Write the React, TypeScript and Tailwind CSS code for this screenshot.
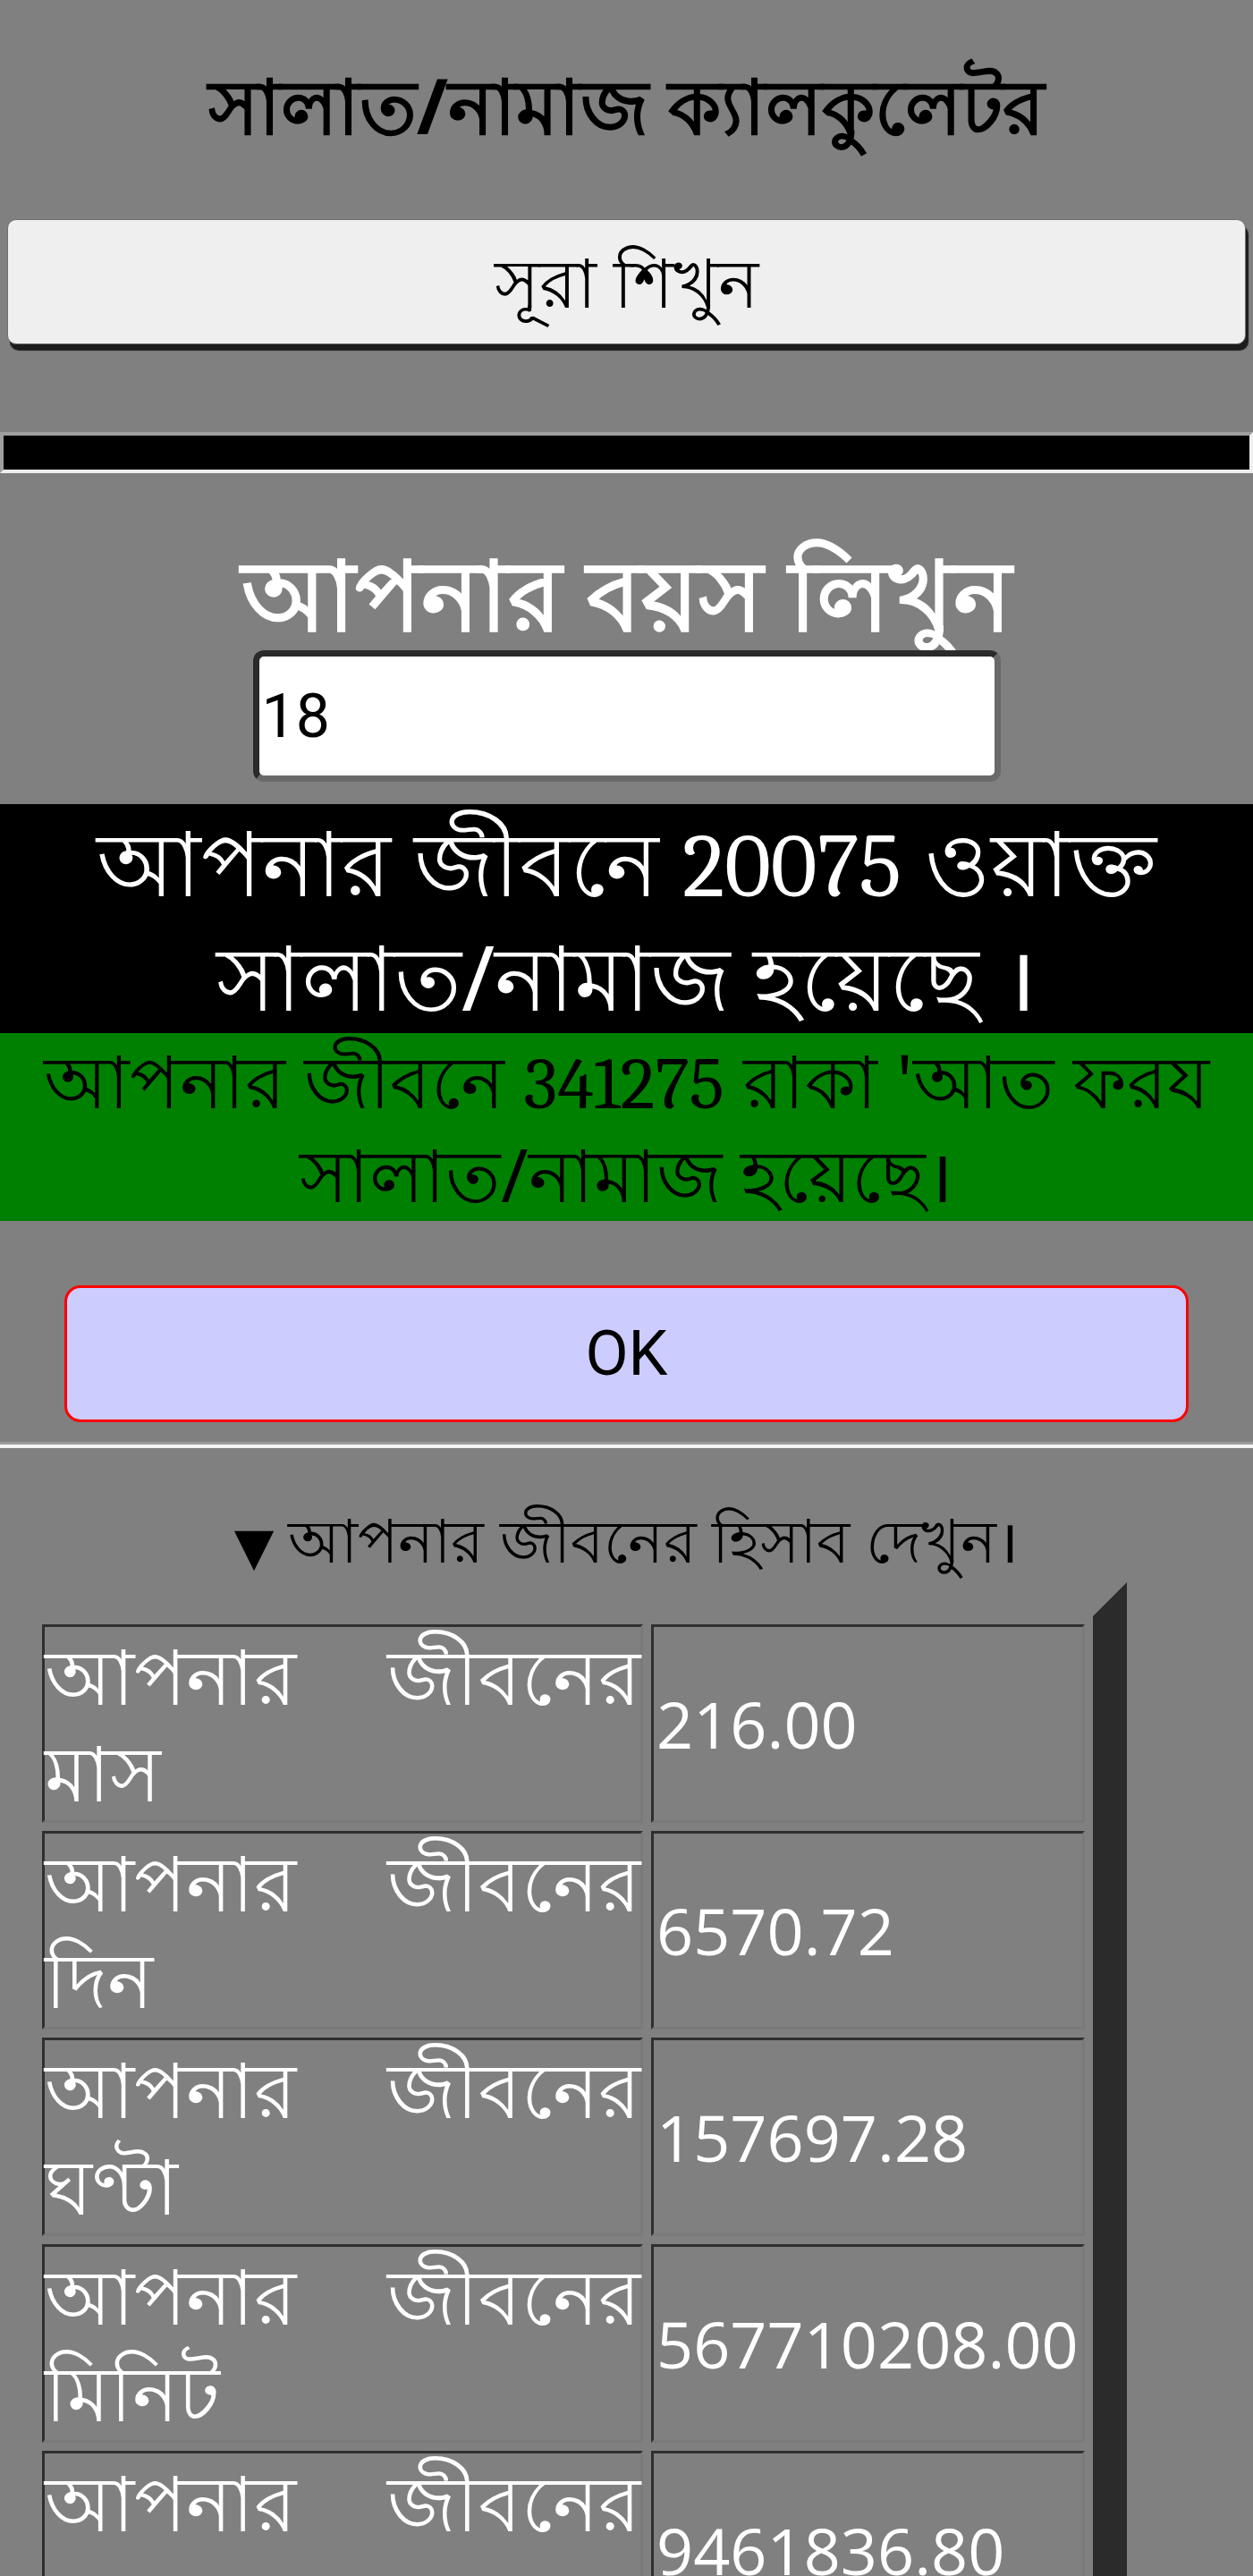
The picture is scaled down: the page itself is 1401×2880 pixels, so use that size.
import React from "react";

const rows = [
  { label: "আপনার জীবনের মাস", value: "216.00" },
  { label: "আপনার জীবনের দিন", value: "6570.72" },
  { label: "আপনার জীবনের ঘণ্টা", value: "157697.28" },
  { label: "আপনার জীবনের মিনিট", value: "567710208.00" },
  { label: "আপনার জীবনের সেকেন্ড", value: "9461836.80" },
];

export default function App() {
  return (
    <main className="min-h-screen bg-[#808080] font-['Noto_Sans',sans-serif] pb-10">
      {/* Title */}
      <h1 className="pt-[57px] text-center text-[85px] font-bold leading-[120px] text-black">
        সালাত/নামাজ ক্যালকুলেটর
      </h1>

      {/* Sura button */}
      <div className="mt-[68px] px-2">
        <button className="flex h-[140px] w-full items-center justify-center rounded-[10px] border border-[#6f6f6f] bg-[#efefef] text-[76px] text-black shadow-[3px_7px_1px_#1c1c1c]">
          সূরা শিখুন
        </button>
      </div>

      {/* Divider bar */}
      <div className="mt-[98px] h-[46px] border-4 border-t-[#9e9e9e] border-l-[#9e9e9e] border-b-[#efefef] border-r-[#efefef] bg-black" />

      {/* Age input */}
      <h2 className="mt-[72px] text-center text-[109px] font-bold leading-[123px] text-white">
        আপনার বয়স লিখুন
      </h2>
      <div className="mt-[3px] flex justify-center">
        <input
          type="text"
          defaultValue="18"
          className="h-[147px] w-[836px] rounded-[12px] border-[7px] border-t-[#2b2b2b] border-l-[#2b2b2b] border-b-[#6a6a6a] border-r-[#6a6a6a] bg-white px-[3px] font-['Roboto',sans-serif] text-[68px] text-black outline-none"
        />
      </div>

      {/* Results */}
      <div className="mt-[25px] h-[256px] bg-black text-center text-[100px] leading-[128px] text-white">
        আপনার জীবনে <span className="font-serif font-light leading-none">20075</span> ওয়াক্ত সালাত/নামাজ হয়েছে ।
      </div>
      <div className="h-[210px] bg-[#008000] text-center text-[82px] leading-[105px] text-black">
        আপনার জীবনে <span className="font-serif font-light leading-none">341275</span> রাকা 'আত ফরয সালাত/নামাজ হয়েছে।
      </div>

      {/* OK */}
      <div className="mt-[72px] flex justify-center">
        <button className="h-[153px] w-[1257px] rounded-[18px] border-[3px] border-[#ff0000] bg-[#ccccff] font-['Roboto',sans-serif] text-[70px] text-black">
          OK
        </button>
      </div>

      <div className="mt-[22px] border-t-[3px] border-t-[#9a9a9a] border-b-[4px] border-b-[#f2f2f2]" />

      {/* Details */}
      <details open className="mt-[54px]">
        <summary className="list-none text-center text-[67px] leading-[96px] text-black">
          <span className="mr-[16px] inline-block align-middle font-['DejaVu_Sans',sans-serif] text-[58px] leading-none">▼</span>
          আপনার জীবনের হিসাব দেখুন।
        </summary>
        <table className="border-separate border-spacing-[9px] border-[38px] border-t-[#808080] border-l-[#808080] border-r-[#2b2b2b] border-b-[#2b2b2b]">
          <tbody>
            {rows.map((r) => (
              <tr key={r.value}>
                <td className="h-[216px] w-[672px] border-[3px] border-t-[#2f2f2f] border-l-[#2f2f2f] border-b-[#7a7a7a] border-r-[#7a7a7a] p-0 text-justify align-middle text-[86px] leading-[108px] text-white">
                  {r.label}
                </td>
                <td className="h-[216px] w-[485px] border-[3px] border-t-[#2f2f2f] border-l-[#2f2f2f] border-b-[#7a7a7a] border-r-[#7a7a7a] px-[3px] align-middle font-['Open_Sans',sans-serif] text-[72px] text-white">
                  {r.value}
                </td>
              </tr>
            ))}
          </tbody>
        </table>
      </details>
    </main>
  );
}
